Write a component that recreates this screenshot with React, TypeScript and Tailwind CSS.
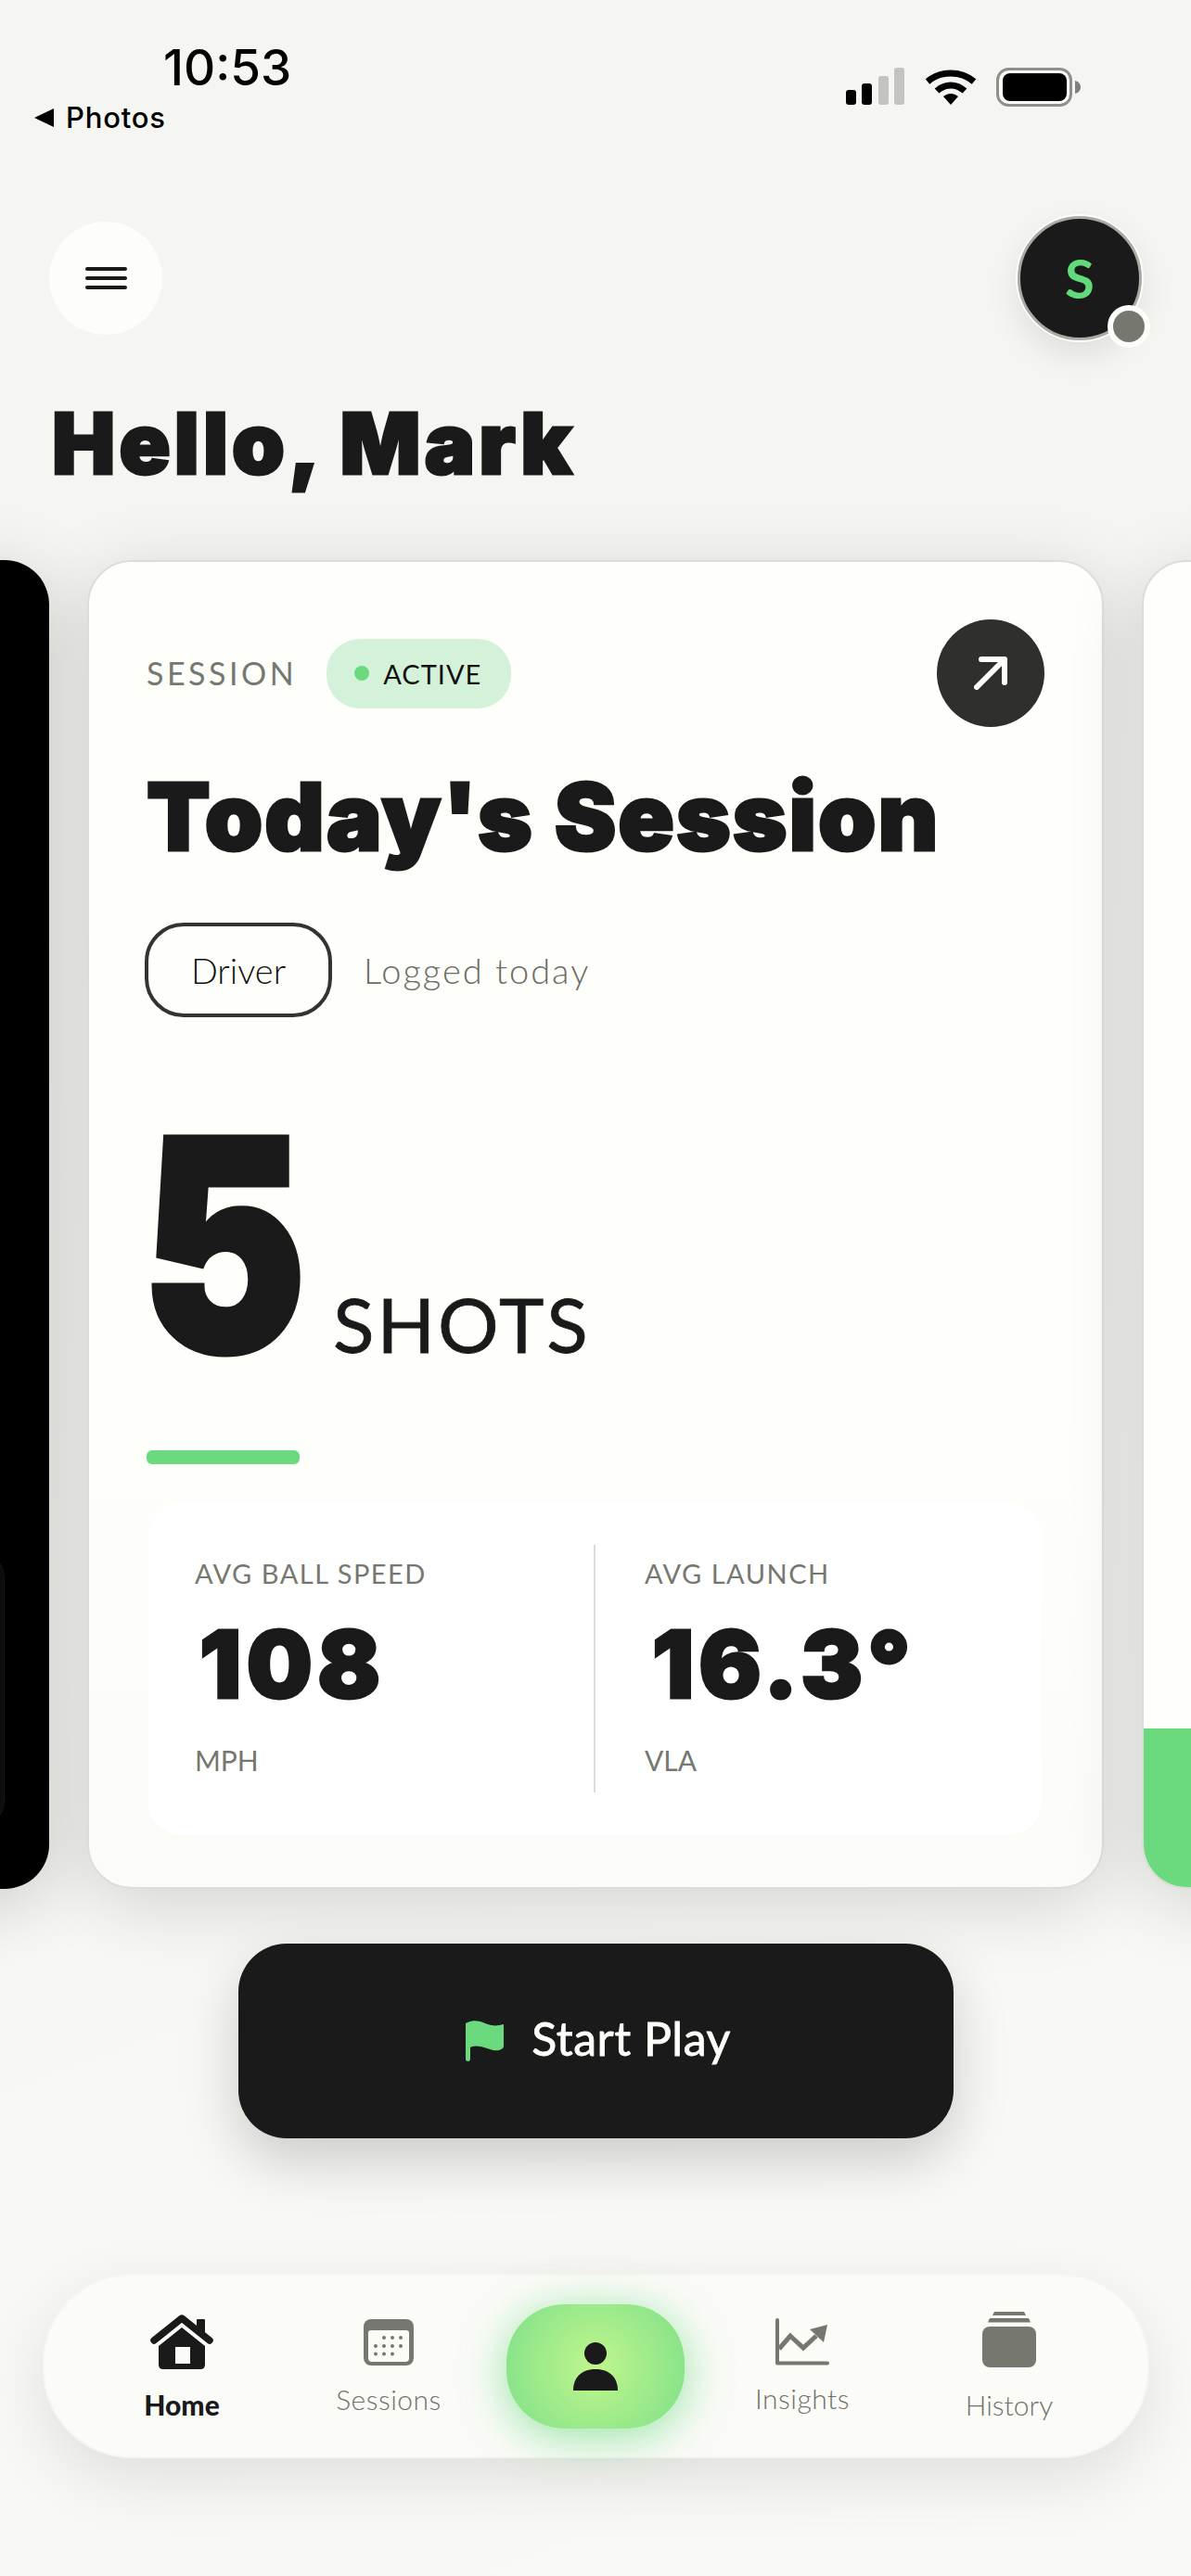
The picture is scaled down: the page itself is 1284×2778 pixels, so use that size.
import React from "react";

const Signal = () => (
  <svg width="64" height="40" viewBox="0 0 64 40">
    <rect x="0" y="24" width="11" height="16" rx="3" fill="#000" />
    <rect x="17" y="17" width="11" height="23" rx="3" fill="#000" />
    <rect x="35" y="9" width="11" height="31" rx="3" fill="#c3c4bf" />
    <rect x="52" y="0" width="11" height="40" rx="3" fill="#c3c4bf" />
  </svg>
);

const Wifi = () => (
  <svg width="56" height="40" viewBox="0 0 56 40">
    <path d="M3 15 C17 3 39 3 53 15" fill="none" stroke="#000" strokeWidth="7" />
    <path d="M13 25 C22 17 34 17 43 25" fill="none" stroke="#000" strokeWidth="7" />
    <path d="M20 31 C25 27 31 27 36 31 L28 40 Z" fill="#000" />
  </svg>
);

const Battery = () => (
  <svg width="92" height="42" viewBox="0 0 92 42">
    <rect x="1.5" y="1.5" width="79" height="39" rx="12" fill="#fdfdfa" stroke="#8f908b" strokeWidth="3" />
    <rect x="7" y="6" width="69" height="30" rx="8" fill="#000" />
    <path d="M85 14 C89 15 91 18 91 21 C91 24 89 27 85 28 Z" fill="#80817d" />
  </svg>
);

const HomeIcon = () => (
  <svg width="68" height="60" viewBox="0 0 68 60">
    <rect x="50" y="6" width="9" height="16" rx="1" fill="#1a1a1a" />
    <path d="M4 29 L34 5 L64 29" fill="none" stroke="#1a1a1a" strokeWidth="7.5" strokeLinecap="round" strokeLinejoin="round" />
    <path d="M34 15 L59 35 V55 Q59 60 54 60 H14 Q9 60 9 55 V35 Z" fill="#1a1a1a" />
    <rect x="27" y="36" width="16" height="18" fill="#fbfbf8" />
  </svg>
);

const CalendarIcon = () => (
  <svg width="54" height="50" viewBox="0 0 54 50">
    <rect x="0" y="0" width="54" height="50" rx="8" fill="#767870" />
    <path d="M5 15 Q5 12 8 12 H46 Q49 12 49 15 V42 Q49 46 45 46 H9 Q5 46 5 42 Z" fill="#fbfbf8" />
    {[22, 31, 40].map((x) => <circle key={`a${x}`} cx={x} cy="20" r="2" fill="#767870" />)}
    {[13, 22, 31, 40].map((x) => <circle key={`b${x}`} cx={x} cy="29" r="2" fill="#767870" />)}
    {[13, 22, 31].map((x) => <circle key={`c${x}`} cx={x} cy="37.5" r="2" fill="#767870" />)}
  </svg>
);

const InsightsIcon = () => (
  <svg width="60" height="52" viewBox="0 0 60 52">
    <path d="M3 2 V48.500 H57" fill="none" stroke="#767870" strokeWidth="4" strokeLinecap="round" strokeLinejoin="round" />
    <path d="M5 33 L17 19 L31 32 L45 19" fill="none" stroke="#767870" strokeWidth="5" />
    <path d="M38 12 L57 7 L53 26 Z" fill="#767870" />
  </svg>
);

const HistoryIcon = () => (
  <svg width="58" height="60" viewBox="0 0 58 60">
    <path d="M13 0 H45 L47 4 H11 Z" fill="#767870" />
    <path d="M8 7 H50 L52 11.500 H6 Z" fill="#767870" />
    <rect x="0" y="16" width="58" height="44" rx="8" fill="#767870" />
  </svg>
);

const PersonIcon = () => (
  <svg width="48" height="52" viewBox="0 0 48 52">
    <ellipse cx="24" cy="12" rx="12" ry="12" fill="#1a1a1a" />
    <path d="M0 52 C0 36 11 29 24 29 C37 29 48 36 48 52 Z" fill="#1a1a1a" />
  </svg>
);

const FlagIcon = () => (
  <svg width="41" height="44" viewBox="0 0 41 44">
    <path d="M0 3 C8 -1 14 0 21 3 C28 6 34 6 41 4 V28 C40 31 36 33 30 32 C22 30 12 25 5 29 V41 Q5 44 2.500 44 Q0 44 0 41 Z" fill="#6bda7f" />
  </svg>
);

export default function App() {
  return (
    <div className="flex h-[2778px] w-[1284px] flex-col overflow-hidden bg-[linear-gradient(160deg,#f5f5f1_0%,#f5f5f1_30%,#f9f9f6_100%)] font-['Lato',sans-serif] text-[#1a1a1a]">
      {/* status bar */}
      <div className="flex h-[142px] shrink-0 items-start justify-between pl-[37px] pr-[118px] font-['Inter',sans-serif] text-black">
        <div className="flex flex-col pt-[47px]">
          <div className="ml-[139px] text-[53px] font-medium leading-[52px] tracking-[0px]">10:53</div>
          <div className="mt-[13px] flex h-[30px] items-center gap-[12px]">
            <svg width="22" height="20" viewBox="0 0 22 20"><path d="M0 10 L21 0 V20 Z" fill="#000" /></svg>
            <span className="text-[31px] font-medium leading-[30px] tracking-[0.8px]">Photos</span>
          </div>
        </div>
        <div className="mt-[73px] flex items-start gap-[21px]">
          <Signal />
          <Wifi />
          <Battery />
        </div>
      </div>

      {/* header */}
      <div className="mt-[91px] flex shrink-0 items-center justify-between px-[53px]">
        <button className="flex h-[122px] w-[122px] flex-col items-center justify-center gap-[5.5px] rounded-full bg-[#fdfdfa]">
          <span className="h-[4.5px] w-[45px] rounded-full bg-[#1a1a1a]" />
          <span className="h-[4.5px] w-[45px] rounded-full bg-[#1a1a1a]" />
          <span className="h-[4.5px] w-[45px] rounded-full bg-[#1a1a1a]" />
        </button>
        <div className="relative flex h-[134px] w-[134px] items-center justify-center rounded-full border-[3px] border-[#a9a9a6] bg-[#1a1a1a] shadow-[0_0_0_2px_#fdfdfa,0_14px_36px_rgba(0,0,0,0.1)]">
          <span className="text-[58px] font-bold leading-none text-[#62d97a]">S</span>
          <span className="absolute bottom-[-11px] right-[-12px] h-[46px] w-[46px] rounded-full border-[6px] border-[#fdfdfa] bg-[#767870]" />
        </div>
      </div>

      {/* greeting */}
      <h1 className="ml-[56px] mt-[66px] h-[91px] shrink-0 font-['Inter',sans-serif] text-[91px] font-black leading-[91px] tracking-[4.2px] [-webkit-text-stroke:3px_#1a1a1a]">Hello, Mark</h1>

      {/* carousel */}
      <div className="mt-[80px] flex h-[1433px] shrink-0 justify-center gap-[41px]">
        <div className="flex h-full w-[1096px] shrink-0 flex-col items-end justify-end rounded-[48px] bg-black pb-[65px] pr-[48px] shadow-[0_16px_80px_rgba(0,0,0,0.18)]">
          <div className="h-[300px] w-[200px] rounded-[30px] border border-[#151515] bg-[#0d0d0d]" />
        </div>

        <div className="flex h-full w-[1096px] shrink-0 flex-col rounded-[48px] border-[2px] border-[#dcdcd8] bg-[linear-gradient(180deg,#fefefa_0%,#fefefa_65%,#fbfbf7_100%)] px-[62px] pt-[62px] shadow-[0_16px_80px_rgba(0,0,0,0.15)]">
          <div className="flex h-[116px] items-center justify-between">
            <div className="flex items-center gap-[32px]">
              <span className="text-[34px] leading-none tracking-[3.5px] text-[#767870]">SESSION</span>
              <span className="flex h-[75px] w-[199px] items-center gap-[15px] rounded-[36px] bg-[#d4f2d9] pl-[30px]">
                <span className="h-[16px] w-[16px] rounded-full bg-[#6bda7f]" />
                <span className="text-[29px] leading-none tracking-[1px] text-[#111]">ACTIVE</span>
              </span>
            </div>
            <button className="flex h-[116px] w-[116px] items-center justify-center rounded-full bg-[#2f2f2d]">
              <svg width="37" height="36" viewBox="0 0 37 36">
                <path d="M3 33 L33 3 M8 3 H33 V28" fill="none" stroke="#fefefa" strokeWidth="6" strokeLinecap="round" strokeLinejoin="round" />
              </svg>
            </button>
          </div>

          <h2 className="mt-[47px] h-[100px] font-['Inter',sans-serif] text-[100px] font-black leading-[100px] tracking-[2px] [-webkit-text-stroke:3px_#1a1a1a]">Today's Session</h2>

          <div className="mt-[64px] flex items-center gap-[34px]">
            <span className="-ml-[2px] flex h-[102px] w-[202px] items-center justify-center rounded-[42px] border-[4px] border-[#333] text-[38px] font-light leading-none text-[#111]">Driver</span>
            <span className="text-[38px] font-light leading-none tracking-[2px] text-[#6a6c65]">Logged today</span>
          </div>

          <div className="mt-[126px] flex h-[238px] items-end">
            <span className="-ml-[5px] block h-[238px] w-[206px] origin-top-left scale-x-[0.84] font-['Inter',sans-serif] text-[316px] font-black leading-[238px] [-webkit-text-stroke:7px_#1a1a1a]">5</span>
            <span className="mb-[5px] h-[58px] text-[82px] leading-[58px] tracking-[3px] [-webkit-text-stroke:0.8px_#1a1a1a]">SHOTS</span>
          </div>

          <div className="mt-[103px] h-[15px] w-[165px] rounded-[6px] bg-[#6bda7f]" />

          <div className="ml-[2px] mt-[41px] flex h-[359px] w-[963px] rounded-[36px] bg-white py-[46px]">
            <div className="w-[482px] border-r-[2px] border-[#dcdcd8] pl-[50px]">
              <div className="mt-[16px] h-[30px] text-[29px] leading-[30px] tracking-[1.5px] text-[#767870]">AVG BALL SPEED</div>
              <div className="mt-[33px] h-[100px] pl-[5px] font-['Inter',sans-serif] text-[100px] font-black leading-[100px] tracking-[5.5px] [-webkit-text-stroke:3px_#1a1a1a]">108</div>
              <div className="mt-[38px] h-[30px] text-[30px] leading-[30px] text-[#767870]">MPH</div>
            </div>
            <div className="pl-[53px]">
              <div className="mt-[16px] h-[30px] text-[29px] leading-[30px] tracking-[1.5px] text-[#767870]">AVG LAUNCH</div>
              <div className="mt-[33px] h-[100px] pl-[8px] font-['Inter',sans-serif] text-[100px] font-black leading-[100px] tracking-[5px] [-webkit-text-stroke:3px_#1a1a1a]">16.3°</div>
              <div className="mt-[38px] h-[30px] text-[30px] leading-[30px] text-[#767870]">VLA</div>
            </div>
          </div>
        </div>

        <div className="flex h-full w-[1096px] shrink-0 flex-col overflow-hidden rounded-[48px] border-[2px] border-[#dcdcd8] bg-[#fefefa] shadow-[0_16px_80px_rgba(0,0,0,0.15)]">
          <div className="flex-1" />
          <div className="h-[171px] bg-[#6bda7f]" />
        </div>
      </div>

      {/* start play */}
      <button className="relative mx-auto mt-[59px] flex h-[210px] w-[771px] shrink-0 items-center justify-center gap-[30px] rounded-[52px] bg-[#1a1a1a] pl-[6px] shadow-[0_24px_60px_rgba(0,0,0,0.18)]">
        <FlagIcon />
        <span className="mb-[6px] text-[50px] leading-none tracking-[0.5px] text-[#fefefa] [-webkit-text-stroke:0.8px_#fefefa]">Start Play</span>
      </button>

      {/* nav */}
      <div className="relative mx-auto mt-[146px] h-[199px] w-[1193px] shrink-0 rounded-[96px] border-[2px] border-[#f6f6f3] bg-[#fbfbf8] shadow-[0_24px_70px_rgba(0,0,0,0.1)]">
        <div className="mx-auto grid h-full w-[1115px] grid-cols-5">
          <div className="flex flex-col items-center pt-[41px]">
            <HomeIcon />
            <span className="mt-[23px] text-[30px] font-black leading-[30px]">Home</span>
          </div>
          <div className="flex flex-col items-center pt-[47px]">
            <CalendarIcon />
            <span className="mt-[21px] text-[30px] font-light leading-[30px] tracking-[0.5px] text-[#6f716a]">Sessions</span>
          </div>
          <div className="flex items-center justify-center">
            <button className="flex h-[134px] w-[192px] items-center justify-center rounded-[62px] bg-[radial-gradient(circle,#c0f68c_0%,#7fe089_100%)] shadow-[0_8px_50px_rgba(107,218,127,0.7)]">
              <PersonIcon />
            </button>
          </div>
          <div className="flex flex-col items-center pt-[46px]">
            <InsightsIcon />
            <span className="mt-[19px] text-[30px] font-light leading-[30px] tracking-[0.5px] text-[#6f716a]">Insights</span>
          </div>
          <div className="flex flex-col items-center pt-[39px]">
            <HistoryIcon />
            <span className="mt-[25px] text-[30px] font-light leading-[30px] text-[#6f716a]">History</span>
          </div>
        </div>
      </div>
    </div>
  );
}
